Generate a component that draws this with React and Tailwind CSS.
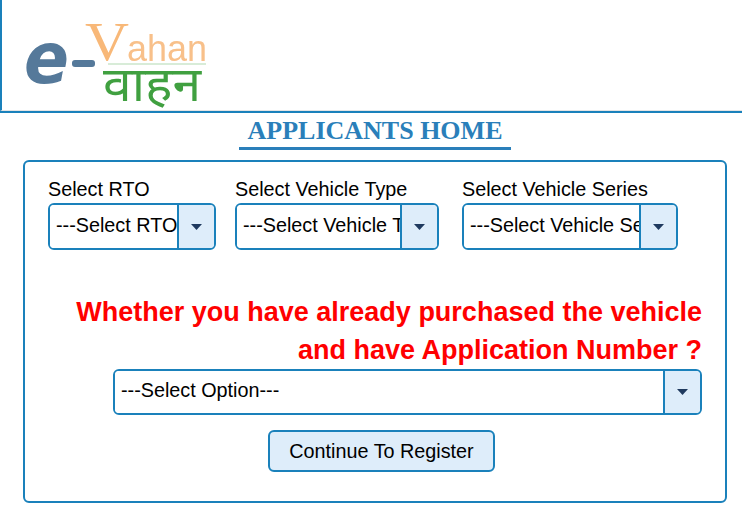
const SANS = "font-['Liberation_Sans',Arial,sans-serif]";

function Logo() {
    return (
        <svg width="210" height="108" viewBox="0 0 210 108" className="block blur-[0.4px]">
            <text x="22" y="83" fontFamily="'DejaVu Sans',sans-serif" fontWeight="700" fontStyle="italic" fontSize="72" fill="#55799a" textLength="45" lengthAdjust="spacingAndGlyphs">e</text>
            <rect x="70" y="60" width="23" height="7" rx="3" fill="#55799a" />
            <text x="83" y="60" fontFamily="'Liberation Serif',serif" fontSize="54" fill="#f8b878" textLength="44" lengthAdjust="spacingAndGlyphs">V</text>
            <text x="125" y="61" fontFamily="'Liberation Sans',sans-serif" fontSize="36" fill="#f8c08a" textLength="80" lengthAdjust="spacingAndGlyphs">ahan</text>
            <rect x="106" y="63" width="98" height="2" fill="#d8ecd8" />
            <text x="101" y="101" fontFamily="'Noto Sans','DejaVu Sans',sans-serif" fontSize="48" fill="#40a040" textLength="98" lengthAdjust="spacingAndGlyphs">वाहन</text>
        </svg>
    );
}

function Dropdown({ className, text, textClass = "pb-[1px]" }) {
    return (
        <div className={`flex overflow-hidden rounded-md border-2 border-[#1a81bb] bg-white ${className}`}>
            <select className={`${SANS} ${textClass} min-w-0 flex-1 appearance-none bg-white pl-[6px] text-[19.8px] text-black outline-none`}>
                <option>{text}</option>
            </select>
            <span className="flex w-[37px] shrink-0 items-center justify-center border-l-2 border-[#1a81bb] bg-[#deedfa] pr-[1px]">
                <svg width="11" height="6" viewBox="0 0 11 6"><path d="M0 0h11L5.5 6z" fill="#1f3a5f" /></svg>
            </span>
        </div>
    );
}

export default function App() {
    return (
        <div className={`${SANS} h-[518px] w-[742px] overflow-hidden bg-white`}>
            <div className="h-[113px] border-b-2 border-[#1a81bb]">
                <div className="h-[111px] border-b-[1px] border-l-2 border-[#1a81bb] border-b-[#e4e4e4]">
                    <Logo />
                </div>
            </div>

            <div className="flex h-[47px] justify-center pl-[8px]">
                <h2 className="h-[37px] w-[272px] border-b-[3px] border-[#2a7fba] pt-[1px] text-center font-['Liberation_Serif',serif] text-[26px] leading-[34px] font-bold text-[#2a7fba]">
                    APPLICANTS HOME
                </h2>
            </div>

            <div className="ml-[23px] h-[343px] w-[704px] rounded-md border-2 border-[#1a81bb] px-[23px] pt-[14px]">
                <div className="flex">
                    <div className="mr-[19px] w-[168px]">
                        <label className="block text-[19.8px] leading-[27px] text-black">Select RTO</label>
                        <Dropdown className="h-[47px]" text="---Select RTO---" />
                    </div>
                    <div className="mr-[23px] w-[204px]">
                        <label className="block text-[19.8px] leading-[27px] text-black">Select Vehicle Type</label>
                        <Dropdown className="h-[47px]" text="---Select Vehicle Type---" />
                    </div>
                    <div className="w-[216px]">
                        <label className="block text-[19.8px] leading-[27px] text-black">Select Vehicle Series</label>
                        <Dropdown className="h-[47px]" text="---Select Vehicle Series---" />
                    </div>
                </div>

                <div className="mt-[43px] flex flex-col items-end">
                    <p className="w-[640px] text-right text-[27px] leading-[38px] font-bold text-[#ff0000]">
                        Whether you have already purchased the vehicle and have Application Number ?
                    </p>
                    <Dropdown className="h-[46px] w-[589px]" text="---Select Option---" textClass="pb-[3px]" />
                </div>

                <div className="mt-[15px] flex justify-center pl-[13px]">
                    <button className="h-[42px] w-[227px] rounded-md border-2 border-[#1a81bb] bg-[#deedfa] pt-[1px] text-[19.8px] text-black">
                        Continue To Register
                    </button>
                </div>
            </div>
        </div>
    );
}
